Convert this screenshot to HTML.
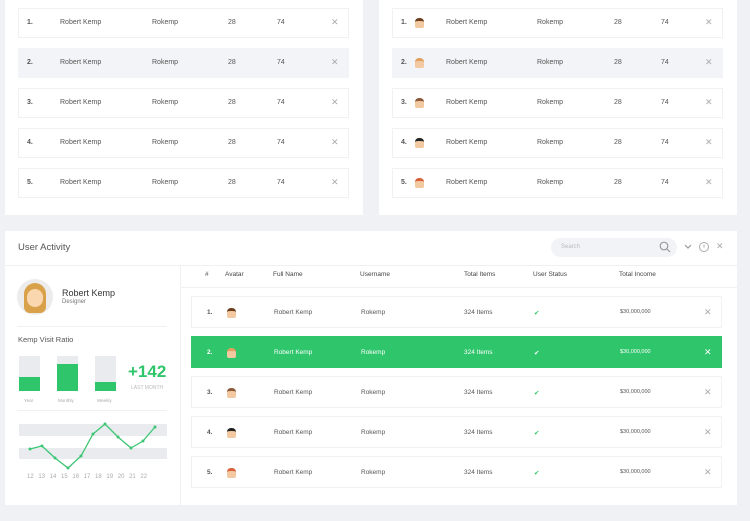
<!DOCTYPE html>
<html><head><meta charset="utf-8"><style>
*{margin:0;padding:0;box-sizing:border-box}
body{width:750px;height:521px;background:#eff1f4;font-family:"Liberation Sans",sans-serif;position:relative;overflow:hidden;color:#444}
.p{position:absolute;background:#fff}
.r{position:absolute;height:30px;border:1px solid #f0f1f3;background:#fff;font-size:7px;color:#555}
.r span{position:absolute;top:10px}
.g{background:#f3f4f7}
.x{color:#aaa;font-size:9px;top:8px!important}
.av{position:absolute;width:9px;height:10px;top:9px;border-radius:4px 4px 2px 2px;background:#f2c9a0;border-top:3px solid #6b3e1e}
.b{position:absolute;height:32px;border:1px solid #f0f1f3;background:#fff;font-size:6.5px;color:#555}
.b span{position:absolute;top:12px}
.gr{background:#2ec56b;border-color:#2ec56b;color:#fff}
.gr span{color:#fff!important}
.ck{color:#2ec56b}
</style></head><body>
<div class="p" style="left:5px;top:0;width:358px;height:215px"></div>
<div class="p" style="left:379px;top:0;width:358px;height:215px"></div>

<div class="r" style="left:18px;top:8px;width:331px"><span style="left:8px;font-weight:bold">1.</span><span style="left:41px">Robert Kemp</span><span style="left:133px">Rokemp</span><span style="left:209px">28</span><span style="left:258px">74</span><span class="x" style="left:312px">✕</span></div>
<div class="r g" style="left:18px;top:48px;width:331px;border-color:#f3f4f7"><span style="left:8px;font-weight:bold">2.</span><span style="left:41px">Robert Kemp</span><span style="left:133px">Rokemp</span><span style="left:209px">28</span><span style="left:258px">74</span><span class="x" style="left:312px">✕</span></div>
<div class="r" style="left:18px;top:88px;width:331px"><span style="left:8px;font-weight:bold">3.</span><span style="left:41px">Robert Kemp</span><span style="left:133px">Rokemp</span><span style="left:209px">28</span><span style="left:258px">74</span><span class="x" style="left:312px">✕</span></div>
<div class="r" style="left:18px;top:128px;width:331px"><span style="left:8px;font-weight:bold">4.</span><span style="left:41px">Robert Kemp</span><span style="left:133px">Rokemp</span><span style="left:209px">28</span><span style="left:258px">74</span><span class="x" style="left:312px">✕</span></div>
<div class="r" style="left:18px;top:168px;width:331px"><span style="left:8px;font-weight:bold">5.</span><span style="left:41px">Robert Kemp</span><span style="left:133px">Rokemp</span><span style="left:209px">28</span><span style="left:258px">74</span><span class="x" style="left:312px">✕</span></div>

<div class="r" style="left:392px;top:8px;width:331px"><span style="left:8px;font-weight:bold">1.</span><i class="av" style="left:22px"></i><span style="left:53px">Robert Kemp</span><span style="left:144px">Rokemp</span><span style="left:221px">28</span><span style="left:268px">74</span><span class="x" style="left:312px">✕</span></div>
<div class="r g" style="left:392px;top:48px;width:331px;border-color:#f3f4f7"><span style="left:8px;font-weight:bold">2.</span><i class="av" style="left:22px;border-top-color:#e0a060"></i><span style="left:53px">Robert Kemp</span><span style="left:144px">Rokemp</span><span style="left:221px">28</span><span style="left:268px">74</span><span class="x" style="left:312px">✕</span></div>
<div class="r" style="left:392px;top:88px;width:331px"><span style="left:8px;font-weight:bold">3.</span><i class="av" style="left:22px;border-top-color:#8b5a3a"></i><span style="left:53px">Robert Kemp</span><span style="left:144px">Rokemp</span><span style="left:221px">28</span><span style="left:268px">74</span><span class="x" style="left:312px">✕</span></div>
<div class="r" style="left:392px;top:128px;width:331px"><span style="left:8px;font-weight:bold">4.</span><i class="av" style="left:22px;border-top-color:#222"></i><span style="left:53px">Robert Kemp</span><span style="left:144px">Rokemp</span><span style="left:221px">28</span><span style="left:268px">74</span><span class="x" style="left:312px">✕</span></div>
<div class="r" style="left:392px;top:168px;width:331px"><span style="left:8px;font-weight:bold">5.</span><i class="av" style="left:22px;border-top-color:#d8603a"></i><span style="left:53px">Robert Kemp</span><span style="left:144px">Rokemp</span><span style="left:221px">28</span><span style="left:268px">74</span><span class="x" style="left:312px">✕</span></div>

<div class="p" style="left:5px;top:231px;width:732px;height:274px"></div>
<div style="position:absolute;left:5px;top:265px;width:732px;height:1px;background:#eef0f2"></div>
<div style="position:absolute;left:180px;top:266px;width:1px;height:239px;background:#eef0f2"></div>
<div style="position:absolute;left:18px;top:242px;font-size:9.5px;color:#555">User Activity</div>
<div style="position:absolute;left:551px;top:238px;width:126px;height:19px;border-radius:10px;background:#f1f3f6;font-size:6px;color:#bbb;padding:6px 0 0 10px">Search</div>
<svg style="position:absolute;left:659px;top:241px" width="12" height="12" viewBox="0 0 12 12"><circle cx="5" cy="5" r="3.8" fill="none" stroke="#999" stroke-width="1.2"/><path d="M8 8l3 3" stroke="#999" stroke-width="1.2"/></svg>
<svg style="position:absolute;left:684px;top:244px" width="8" height="6"><path d="M1 1l3 3 3-3" stroke="#999" fill="none" stroke-width="1.2"/></svg>
<svg style="position:absolute;left:698px;top:241px" width="12" height="12"><circle cx="6" cy="6" r="4.5" fill="none" stroke="#aaa" stroke-width="1"/><path d="M6 3.5v3" stroke="#aaa"/></svg>
<div style="position:absolute;left:716px;top:241px;font-size:9px;color:#aaa">✕</div>

<div style="position:absolute;left:17px;top:279px;width:36px;height:36px;border-radius:50%;background:#ececec"></div>
<div style="position:absolute;left:24px;top:283px;width:22px;height:30px;border-radius:11px 11px 6px 6px;background:#d9a24a"></div>
<div style="position:absolute;left:27px;top:289px;width:16px;height:18px;border-radius:8px;background:#fbd7b0"></div>
<div style="position:absolute;left:62px;top:288px;font-size:9px;color:#333">Robert Kemp</div>
<div style="position:absolute;left:62px;top:299px;font-size:6px;color:#777">Designer</div>
<div style="position:absolute;left:17px;top:326px;width:150px;height:1px;background:#f0f1f3"></div>
<div style="position:absolute;left:18px;top:335px;font-size:7.5px;color:#555">Kemp Visit Ratio</div>
<div style="position:absolute;left:19px;top:356px;width:21px;height:35px;background:#e9ebef"></div><div style="position:absolute;left:19px;top:377px;width:21px;height:14px;background:#2ec56b"></div>
<div style="position:absolute;left:57px;top:356px;width:21px;height:35px;background:#e9ebef"></div><div style="position:absolute;left:57px;top:364px;width:21px;height:27px;background:#2ec56b"></div>
<div style="position:absolute;left:95px;top:356px;width:21px;height:35px;background:#e9ebef"></div><div style="position:absolute;left:95px;top:382px;width:21px;height:9px;background:#2ec56b"></div>
<div style="position:absolute;left:24px;top:398px;font-size:4.5px;color:#aaa">Year</div>
<div style="position:absolute;left:58px;top:398px;font-size:4.5px;color:#aaa">Monthly</div>
<div style="position:absolute;left:97px;top:398px;font-size:4.5px;color:#aaa">Weekly</div>
<div style="position:absolute;left:128px;top:362px;font-size:17px;font-weight:bold;color:#2ec56b">+142</div>
<div style="position:absolute;left:131px;top:385px;font-size:5px;color:#bbb">LAST MONTH</div>
<div style="position:absolute;left:17px;top:410px;width:150px;height:1px;background:#f0f1f3"></div>
<div style="position:absolute;left:19px;top:424px;width:148px;height:12px;background:#e9ebef"></div>
<div style="position:absolute;left:19px;top:448px;width:148px;height:11px;background:#e9ebef"></div>
<svg style="position:absolute;left:0;top:0" width="180" height="480"><polyline points="30,449 42,446 55,458 68,468 81,456 93,434 105,424 118,437 131,448 143,441 155,427" fill="none" stroke="#3cc673" stroke-width="1.3"/><g fill="#3cc673"><circle cx="30" cy="449" r="1.5"/><circle cx="42" cy="446" r="1.5"/><circle cx="55" cy="458" r="1.5"/><circle cx="68" cy="468" r="1.5"/><circle cx="81" cy="456" r="1.5"/><circle cx="93" cy="434" r="1.5"/><circle cx="105" cy="424" r="1.5"/><circle cx="118" cy="437" r="1.5"/><circle cx="131" cy="448" r="1.5"/><circle cx="143" cy="441" r="1.5"/><circle cx="155" cy="427" r="1.5"/></g></svg>
<div style="position:absolute;left:27px;top:474px;font-size:6px;color:#aaa;word-spacing:3px">12 13 14 15 16 17 18 19 20 21 22</div>

<div style="position:absolute;top:271px;font-size:6.5px;color:#444;left:0;width:750px">
<span style="position:absolute;left:205px">#</span><span style="position:absolute;left:225px">Avatar</span><span style="position:absolute;left:273px">Full Name</span><span style="position:absolute;left:360px">Username</span><span style="position:absolute;left:464px">Total Items</span><span style="position:absolute;left:533px">User Status</span><span style="position:absolute;left:619px">Total Income</span></div>
<div style="position:absolute;left:181px;top:287px;width:556px;height:1px;background:#f0f1f3"></div>

<div class="b" style="left:191px;top:296px;width:531px"><span style="left:15px;font-weight:bold">1.</span><i class="av" style="left:35px;top:11px"></i><span style="left:82px">Robert Kemp</span><span style="left:169px">Rokemp</span><span style="left:272px">324 Items</span><span class="ck" style="left:342px">✔</span><span style="left:428px;font-size:5.5px">$30,000,000</span><span class="x" style="left:512px;top:10px!important">✕</span></div>
<div class="b gr" style="left:191px;top:336px;width:531px"><span style="left:15px;font-weight:bold">2.</span><i class="av" style="left:35px;top:11px;border-top-color:#e0a060"></i><span style="left:82px">Robert Kemp</span><span style="left:169px">Rokemp</span><span style="left:272px">324 Items</span><span style="left:342px">✔</span><span style="left:428px;font-size:5.5px">$30,000,000</span><span class="x" style="left:512px;top:10px!important">✕</span></div>
<div class="b" style="left:191px;top:376px;width:531px"><span style="left:15px;font-weight:bold">3.</span><i class="av" style="left:35px;top:11px;border-top-color:#8b5a3a"></i><span style="left:82px">Robert Kemp</span><span style="left:169px">Rokemp</span><span style="left:272px">324 Items</span><span class="ck" style="left:342px">✔</span><span style="left:428px;font-size:5.5px">$30,000,000</span><span class="x" style="left:512px;top:10px!important">✕</span></div>
<div class="b" style="left:191px;top:416px;width:531px"><span style="left:15px;font-weight:bold">4.</span><i class="av" style="left:35px;top:11px;border-top-color:#222"></i><span style="left:82px">Robert Kemp</span><span style="left:169px">Rokemp</span><span style="left:272px">324 Items</span><span class="ck" style="left:342px">✔</span><span style="left:428px;font-size:5.5px">$30,000,000</span><span class="x" style="left:512px;top:10px!important">✕</span></div>
<div class="b" style="left:191px;top:456px;width:531px"><span style="left:15px;font-weight:bold">5.</span><i class="av" style="left:35px;top:11px;border-top-color:#d8603a"></i><span style="left:82px">Robert Kemp</span><span style="left:169px">Rokemp</span><span style="left:272px">324 Items</span><span class="ck" style="left:342px">✔</span><span style="left:428px;font-size:5.5px">$30,000,000</span><span class="x" style="left:512px;top:10px!important">✕</span></div>
</body></html>
